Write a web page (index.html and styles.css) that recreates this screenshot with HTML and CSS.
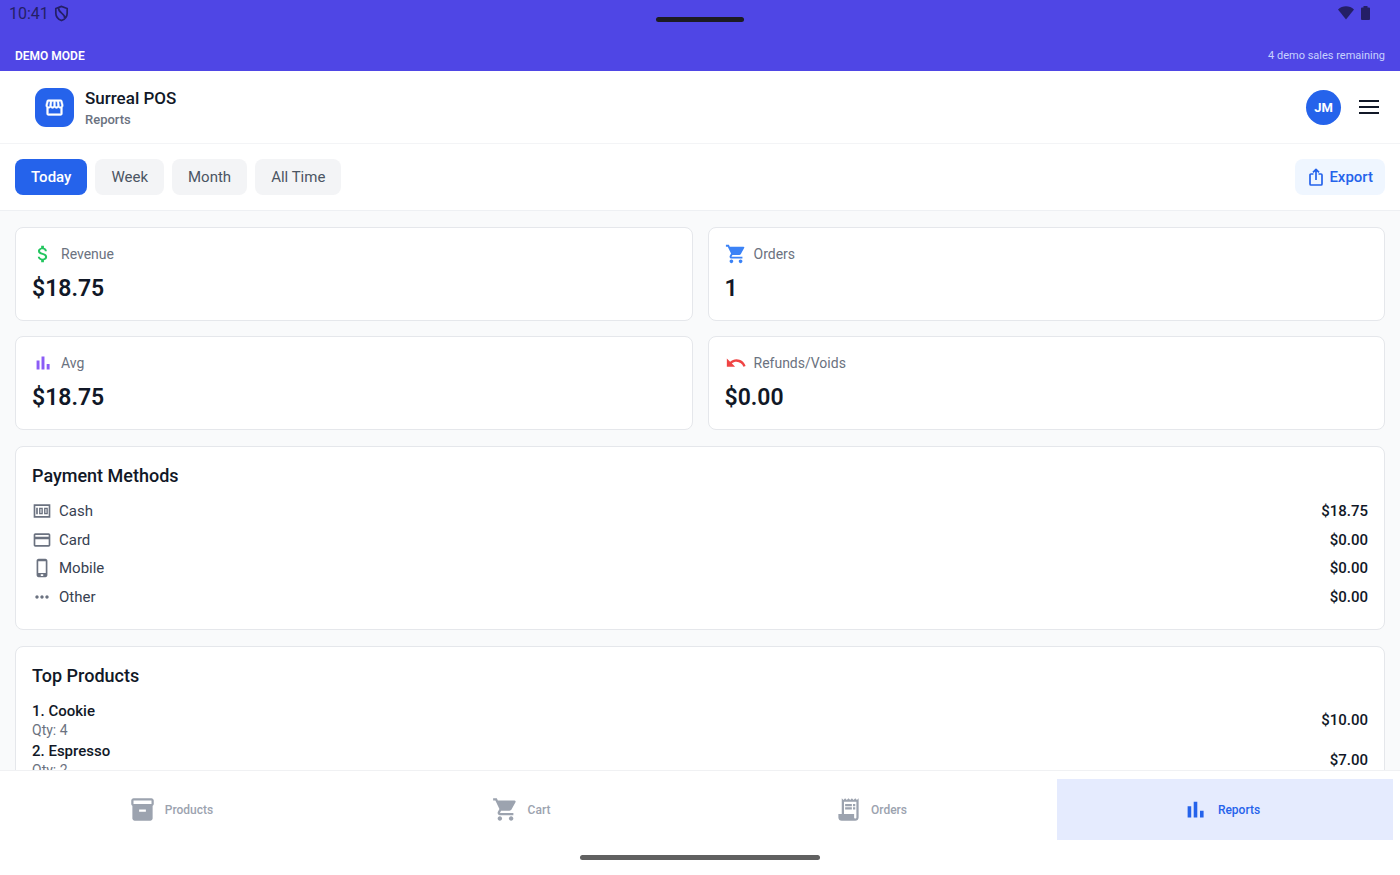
FILE: index.html
```html
<!DOCTYPE html>
<html lang="en">
<head>
<meta charset="utf-8">
<title>Surreal POS – Reports</title>
<link rel="stylesheet" href="styles.css">
</head>
<body>
<svg class="sprite" aria-hidden="true">
  <symbol id="cart" viewBox="0 0 24 24"><path d="M7 18c-1.100 0-1.990.9-1.990 2S5.900 22 7 22s2-.9 2-2-.9-2-2-2zM1 2v2h2l3.600 7.590-1.350 2.450c-.16.28-.25.61-.25.96 0 1.100.9 2 2 2h12v-2H7.420c-.14 0-.25-.11-.25-.25l.03-.12.9-1.630h7.450c.75 0 1.410-.41 1.750-1.030l3.580-6.490A1 1 0 0 0 20.010 4H5.210l-.94-2H1zm16 16c-1.100 0-1.990.9-1.990 2s.89 2 1.990 2 2-.9 2-2-.9-2-2-2z"/></symbol>
  <symbol id="bars" viewBox="0 0 24 24"><path d="M5 9.200h3.200V19H5zM10.400 5h3.200v14h-3.200zM16 13h3.200v6H16z"/></symbol>
</svg>
<div class="top">
  <div class="status">
    <span class="clock">10:41</span>
    <svg class="shield" viewBox="0 0 24 24" stroke="currentColor" stroke-width="2.400"><path d="M12 2 4 5v6.500c0 5 3.400 8.500 8 10.500 4.600-2 8-5.500 8-10.500V5zM8 4.500c-.5 7 9 7 8.500 14"/></svg>
    <span class="notch"></span>
    <svg class="wifi" viewBox="0 0 16 14"><path d="M8 13.500 0 3.500C4.500-.8 11.500-.8 16 3.500z"/></svg>
    <svg class="battery" viewBox="0 0 9 14"><path d="M2.500 0h4v1.500H8q1 0 1 1V13q0 1-1 1H1q-1 0-1-1V2.500q0-1 1-1h1.500z"/></svg>
  </div>
  <div class="demo"><strong>DEMO MODE</strong><span>4 demo sales remaining</span></div>
</div>
<header class="header">
  <div class="logo"><svg viewBox="0 0 24 24"><path d="M21.900 8.890l-1.050-4.370c-.22-.9-1-1.520-1.910-1.520H5.050c-.9 0-1.690.63-1.900 1.520L2.100 8.890c-.24 1.020-.02 2.060.62 2.880.08.110.19.190.28.290V19c0 1.100.9 2 2 2h14c1.100 0 2-.9 2-2v-6.940c.09-.09.2-.18.28-.28.64-.82.87-1.870.62-2.890zM18.910 4.990l1.050 4.370c.1.420.01.84-.25 1.170-.14.180-.44.470-.94.470-.61 0-1.140-.49-1.210-1.140L16.980 5l1.930-.01zM13 5h1.960l.54 4.520c.05.390-.07.780-.33 1.070-.22.260-.54.410-.95.410-.67 0-1.220-.59-1.220-1.310V5zM8.490 9.520L9.040 5H11v4.690c0 .72-.55 1.310-1.290 1.310-.34 0-.65-.15-.89-.41-.25-.29-.37-.68-.33-1.070zM4.040 9.360L5.050 5h1.970l-.58 4.860c-.08.65-.6 1.140-1.210 1.140-.49 0-.8-.29-.93-.47-.27-.32-.36-.75-.26-1.170zM5 19v-6.030c.08.010.15.030.23.030.87 0 1.660-.36 2.240-.95.600.6 1.400.95 2.310.95.870 0 1.650-.36 2.230-.93.590.57 1.390.93 2.290.93.840 0 1.640-.35 2.240-.95.580.59 1.370.95 2.240.95.080 0 .15-.02.23-.03V19H5z"/></svg></div>
  <div class="titles"><h1>Surreal POS</h1><p>Reports</p></div>
  <button class="avatar">JM</button>
  <button class="menu" aria-label="Menu"><svg viewBox="0 0 20 14"><path d="M0 0h20v2H0zM0 6h20v2H0zM0 12h20v2H0z"/></svg></button>
</header>
<div class="filters">
  <button class="chip on">Today</button>
  <button class="chip">Week</button>
  <button class="chip">Month</button>
  <button class="chip">All Time</button>
  <button class="chip export"><svg viewBox="0 0 14 18" stroke="currentColor" stroke-width="1.700" stroke-linejoin="round"><path d="M4.500 6H2Q1 6 1 7v9q0 1 1 1h10q1 0 1-1V7q0-1-1-1H9.500M7 12V1.500M4 4.300l3-3 3 3"/></svg>Export</button>
</div>
<main class="content">
  <section class="stats">
    <article class="card"><div class="label"><svg class="green" viewBox="0 0 24 24"><path d="M11.800 10.900c-2.270-.59-3-1.200-3-2.150 0-1.090 1.010-1.850 2.700-1.850 1.780 0 2.440.85 2.500 2.100h2.210c-.07-1.720-1.120-3.300-3.210-3.810V3h-3v2.160c-1.940.42-3.500 1.680-3.500 3.610 0 2.310 1.910 3.460 4.700 4.130 2.500.6 3 1.480 3 2.410 0 .69-.49 1.790-2.700 1.790-2.060 0-2.870-.92-2.980-2.100h-2.200c.12 2.190 1.760 3.420 3.680 3.830V21h3v-2.150c1.950-.37 3.500-1.500 3.500-3.550 0-2.840-2.430-3.810-4.700-4.400z"/></svg>Revenue</div><div class="value">$18.75</div></article>
    <article class="card"><div class="label"><svg class="blue"><use href="#cart"/></svg>Orders</div><div class="value">1</div></article>
    <article class="card"><div class="label"><svg class="violet"><use href="#bars"/></svg>Avg</div><div class="value">$18.75</div></article>
    <article class="card"><div class="label"><svg class="red" viewBox="0 0 24 24"><path d="M12.500 8c-2.650 0-5.050.99-6.900 2.600L2 7v9h9l-3.620-3.620c1.390-1.160 3.160-1.880 5.120-1.880 3.540 0 6.550 2.310 7.600 5.500l2.370-.78C21.080 11.030 17.150 8 12.500 8z"/></svg>Refunds/Voids</div><div class="value">$0.00</div></article>
  </section>
  <section class="card panel">
    <h2>Payment Methods</h2>
    <div class="rows">
      <div class="row"><svg viewBox="0 0 24 24"><path fill-rule="evenodd" d="M2 4h20v16H2zM4 6v12h16V6zM5 8h2v8H5zM8.500 8h4.500v8H8.500zM10.200 9.700v4.600h1.100V9.700zM14.500 8H19v8h-4.500zM16.200 9.700v4.600h1.100V9.700z"/></svg><span>Cash</span><b>$18.75</b></div>
      <div class="row"><svg viewBox="0 0 24 24"><path d="M20 4H4c-1.110 0-1.990.89-1.990 2L2 18c0 1.110.89 2 2 2h16c1.110 0 2-.89 2-2V6c0-1.110-.89-2-2-2zm0 14H4v-7h16v7zm0-10H4V6h16v2z"/></svg><span>Card</span><b>$0.00</b></div>
      <div class="row"><svg viewBox="0 0 24 24"><path d="M16 1H8C6.340 1 5.500 2.340 5.500 3.500v17C5.500 21.660 6.340 23 8 23h8c1.660 0 2.500-1.340 2.500-2.500v-17C18.500 2.340 17.660 1 16 1zm-2.500 20.500h-3v-2h3v2zm3-3.500h-9V4h9v14z"/></svg><span>Mobile</span><b>$0.00</b></div>
      <div class="row"><svg viewBox="0 0 24 24"><path d="M6 10c-1.100 0-2 .9-2 2s.9 2 2 2 2-.9 2-2-.9-2-2-2zm12 0c-1.100 0-2 .9-2 2s.9 2 2 2 2-.9 2-2-.9-2-2-2zm-6 0c-1.100 0-2 .9-2 2s.9 2 2 2 2-.9 2-2-.9-2-2-2z"/></svg><span>Other</span><b>$0.00</b></div>
    </div>
  </section>
  <section class="card panel products">
    <h2>Top Products</h2>
    <div class="product"><div><h3>1. Cookie</h3><p>Qty: 4</p></div><b>$10.00</b></div>
    <div class="product"><div><h3>2. Espresso</h3><p>Qty: 2</p></div><b>$7.00</b></div>
  </section>
</main>
<nav class="tabs">
  <a href="#products"><svg viewBox="0 0 24 24"><path fill-rule="evenodd" d="M20 2H4c-1 0-2 .9-2 2v3.010c0 .72.430 1.340 1 1.690V20c0 1.100 1.100 2 2 2h14c.9 0 2-.9 2-2V8.700c.57-.35 1-.97 1-1.690V4c0-1.100-1-2-2-2zm-5 12H9v-2h6v2zm5-7H4V4h16v3z"/></svg>Products</a>
  <a href="#cart-tab"><svg><use href="#cart"/></svg>Cart</a>
  <a href="#orders"><svg viewBox="0 0 24 24"><path d="M19.500 3.500 18 2l-1.500 1.500L15 2l-1.500 1.500L12 2l-1.500 1.500L9 2 7.500 3.500 6 2v14H3v3c0 1.660 1.340 3 3 3h12c1.660 0 3-1.340 3-3V2l-1.500 1.500zM19 19c0 .55-.45 1-1 1s-1-.45-1-1v-3H8V5h11v14zM9 7h6v2H9zM16 7h2v2h-2zM9 10h6v2H9zM16 10h2v2h-2z"/></svg>Orders</a>
  <a href="#reports" class="on" aria-current="page"><svg><use href="#bars"/></svg>Reports</a>
</nav>
<div class="gesture"><span></span></div>
</body>
</html>
```
FILE: styles.css
```css
* { box-sizing: border-box; }
body {
  margin: 0;
  height: 100vh;
  display: flex;
  flex-direction: column;
  overflow: hidden;
  background: #fff;
  color: #111827;
  font-family: Roboto, "Liberation Sans", sans-serif;
  font-size: 15px;
}
h1, h2, h3, p { margin: 0; }
h1, h2, h3, b, strong { font-weight: 500; }
button { border: 0; padding: 0; font: inherit; }
svg { display: block; fill: currentColor; flex: none; }
.sprite { position: absolute; width: 0; height: 0; }

.top { background: #4f46e5; flex: none; }
.status {
  position: relative;
  display: flex;
  align-items: center;
  height: 26px;
  padding: 0 30px 0 9px;
  color: #241f66;
}
.clock { font-size: 16px; }
.shield { width: 17px; height: 17px; margin-left: 4px; fill: none; }
.notch {
  position: absolute;
  top: 17px;
  left: 50%;
  width: 88px;
  height: 5px;
  margin-left: -44px;
  border-radius: 3px;
  background: #1c1b22;
}
.wifi { width: 16px; height: 14px; margin-left: auto; }
.battery { width: 9px; height: 14px; margin-left: 7px; }
.demo {
  display: flex;
  align-items: center;
  justify-content: space-between;
  height: 45px;
  padding: 14px 15px 0;
  font-size: 11px;
  color: #c7d2fe;
}
.demo strong { color: #fff; font-size: 12px; font-weight: 600; }

.header {
  flex: none;
  display: flex;
  align-items: center;
  height: 73px;
  padding: 0 21px 0 35px;
  border-bottom: 1px solid #f3f4f6;
}
.logo {
  display: grid;
  place-items: center;
  width: 39px;
  height: 39px;
  border-radius: 11px;
  background: #2563eb;
  color: #fff;
}
.logo svg { width: 21px; height: 21px; stroke: currentColor; stroke-width: 0.5; }
.titles { flex: 1; padding: 4px 0 0 11px; }
.titles h1 { font-size: 17px; line-height: 22px; }
.titles p { font-size: 13px; line-height: 22px; font-weight: 500; color: #6b7280; }
.avatar {
  width: 35px;
  height: 35px;
  border-radius: 50%;
  background: #2563eb;
  color: #fff;
  font-size: 13px;
  font-weight: 700;
}
.menu { margin-left: 18px; background: none; color: #111827; }
.menu svg { width: 20px; height: 14px; }

.filters {
  flex: none;
  display: flex;
  align-items: center;
  gap: 8px;
  height: 67px;
  padding: 0 15px;
  border-bottom: 1px solid #eef0f3;
}
.chip {
  height: 36px;
  padding: 0 16px;
  border-radius: 8px;
  background: #f3f4f6;
  color: #4b5563;
}
.chip.on { background: #2563eb; color: #fff; font-weight: 500; }
.chip.export {
  display: flex;
  align-items: center;
  gap: 6px;
  margin-left: auto;
  padding: 0 12px 0 14px;
  background: #eff6ff;
  color: #2563eb;
  font-weight: 500;
}
.export svg { width: 14px; height: 18px; fill: none; }

.content {
  flex: 1;
  min-height: 0;
  overflow: hidden;
  display: flex;
  flex-direction: column;
  gap: 16px;
  padding: 16px 15px 0;
  background: #f9fafb;
}
.stats { flex: none; display: grid; grid-template-columns: 1fr 1fr; gap: 15px; }
.card {
  flex: none;
  padding: 15px 16px;
  border: 1px solid #e5e7eb;
  border-radius: 8px;
  background: #fff;
}
.label {
  display: flex;
  align-items: center;
  gap: 7px;
  height: 22px;
  font-size: 14px;
  color: #6b7280;
}
.label svg { width: 22px; height: 22px; }
.green { color: #22c55e; }
.blue { color: #3b82f6; }
.violet { color: #8b5cf6; }
.red { color: #ef4444; }
.value { margin-top: 8px; font-size: 23px; line-height: 32px; font-weight: 600; }
.panel { padding: 16px 16px 18px; }
.panel h2 { font-size: 18px; line-height: 26px; margin-bottom: 8px; }
.rows { display: grid; grid-auto-rows: 1fr; height: 114px; }
.row { display: flex; align-items: center; gap: 7px; color: #374151; }
.row svg { width: 20px; height: 20px; color: #6b7280; }
.row b, .product b { margin-left: auto; color: #111827; }
.products h2 { margin-bottom: 11px; }
.product { display: flex; align-items: center; height: 40px; }
.product h3 { font-size: 15px; line-height: 20px; }
.product p { font-size: 14px; line-height: 18px; color: #6b7280; }

.tabs {
  flex: none;
  display: grid;
  grid-template-columns: repeat(4, 1fr);
  gap: 14px;
  padding: 8px 7px 0;
  border-top: 1px solid #f0f1f3;
}
.tabs a {
  display: flex;
  align-items: center;
  justify-content: center;
  gap: 9px;
  height: 61px;
  padding-right: 8px;
  font-size: 12px;
  font-weight: 500;
  color: #9ca3af;
  text-decoration: none;
}
.tabs svg { width: 27px; height: 27px; }
.tabs a.on { background: #e5ebfe; color: #2563eb; }
.gesture { flex: none; height: 35px; padding-top: 15px; }
.gesture span {
  display: block;
  width: 240px;
  height: 5px;
  margin: 0 auto;
  border-radius: 3px;
  background: #616161;
}
```
